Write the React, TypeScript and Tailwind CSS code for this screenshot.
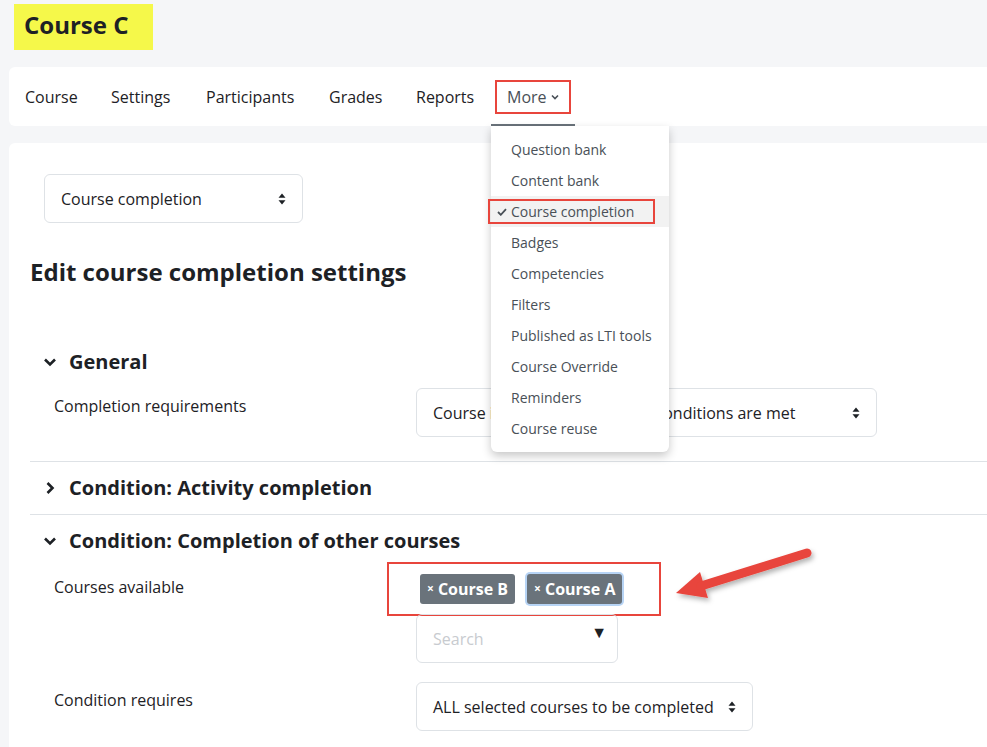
import React from 'react';

const font = { fontFamily: '"Open Sans", "Noto Sans", sans-serif' };

const navItems = [
  { label: 'Course', w: 'w-[86px]' },
  { label: 'Settings', w: 'w-[95px]' },
  { label: 'Participants', w: 'w-[123px]' },
  { label: 'Grades', w: 'w-[87px]' },
  { label: 'Reports', w: 'w-[75px]' },
];

const menuItems = [
  'Question bank',
  'Content bank',
  'Course completion',
  'Badges',
  'Competencies',
  'Filters',
  'Published as LTI tools',
  'Course Override',
  'Reminders',
  'Course reuse',
];

// Up/down arrows used by native-looking selects
const SortIcon = () => (
  <svg width="8" height="12" viewBox="0 0 8 12" className="shrink-0">
    <path d="M4 0.5 L7.5 4.8 H0.5 Z" fill="#1d2125" />
    <path d="M4 11.5 L7.5 7.2 H0.5 Z" fill="#1d2125" />
  </svg>
);

const ChevronDown = () => (
  <svg width="14" height="10" viewBox="0 0 14 10">
    <path d="M2 2.5 L7 7.5 L12 2.5" fill="none" stroke="#1d2125" strokeWidth="2.6" />
  </svg>
);

const ChevronRight = () => (
  <svg width="10" height="14" viewBox="0 0 10 14">
    <path d="M2.5 2 L7.5 7 L2.5 12" fill="none" stroke="#1d2125" strokeWidth="2.6" />
  </svg>
);

const Select = ({ label, width }: { label: string; width: string }) => (
  <div className={`${width} h-[49px] border border-[#dee2e6] rounded-md bg-white flex items-center justify-between pl-4 pr-4 overflow-hidden`}>
    <span className="text-[16px] text-[#1d2125] whitespace-nowrap">{label}</span>
    <SortIcon />
  </div>
);

const Badge = ({ label, focused }: { label: string; focused?: boolean }) => (
  <div
    className={`h-[30px] px-[7px] rounded-[3px] bg-[#6a737b] text-white text-[16px] font-bold flex items-center gap-1 ${
      focused ? 'ring-2 ring-[#b7d4f5]' : ''
    }`}
  >
    <span className="text-[12px]">×</span>
    <span>{label}</span>
  </div>
);

const SectionHeader = ({ title, open }: { title: string; open: boolean }) => (
  <div className="flex items-center h-[52px]">
    <div className="w-[39px] flex justify-center">{open ? <ChevronDown /> : <ChevronRight />}</div>
    <h3 className="text-[20px] font-bold text-[#1d2125]">{title}</h3>
  </div>
);

export default function App() {
  return (
    <div className="min-h-[747px] bg-[#f5f6f8] pl-[9px] overflow-hidden relative" style={font}>
      {/* Page title */}
      <div className="pt-[4px] pl-[5px]">
        <div className="inline-block bg-[#f5f84a] h-[46px] w-[139px] pl-[10px] pt-[6px]">
          <h1 className="text-[24px] font-bold text-[#1d2125] leading-[30px]">Course C</h1>
        </div>
      </div>

      {/* Secondary navigation */}
      <div className="mt-[17px] h-[59px] bg-white rounded-l-md flex items-center pl-4 relative">
        {navItems.map((n) => (
          <div key={n.label} className={`${n.w} text-[16px] text-[#1d2125] whitespace-nowrap`}>
            {n.label}
          </div>
        ))}
        <div className="relative h-full w-[84px] flex items-center justify-center">
          <div className="border-2 border-[#e8453c] h-[34px] w-[76px] pl-[10px] flex items-center gap-1 text-[16px] text-[#495057]">
            More
            <svg width="8" height="6" viewBox="0 0 8 6">
              <path d="M1 1.5 L4 4.5 L7 1.5" fill="none" stroke="#495057" strokeWidth="1.6" />
            </svg>
          </div>
          <div className="absolute left-0 right-0 bottom-0 h-[2px] bg-[#6a737b]" />
          {/* Dropdown menu */}
          <div className="absolute top-[59px] left-0 w-[178px] bg-white rounded-b-md shadow-[0_4px_10px_rgba(0,0,0,0.22)] py-2 z-20">
            {menuItems.map((m) => {
              const active = m === 'Course completion';
              return (
                <div
                  key={m}
                  className={`h-[31px] flex items-center text-[14px] text-[#495057] relative ${active ? 'bg-[#f2f2f2]' : ''}`}
                >
                  {active && (
                    <>
                      <div className="absolute left-[-3px] top-[3px] w-[167px] h-[25px] border-2 border-[#e8453c]" />
                      <svg width="10" height="8" viewBox="0 0 10 8" className="absolute left-[6px]">
                        <path d="M1 4 L3.8 6.8 L9 1.2" fill="none" stroke="#495057" strokeWidth="1.8" />
                      </svg>
                    </>
                  )}
                  <span className="pl-5 whitespace-nowrap">{m}</span>
                </div>
              );
            })}
          </div>
        </div>
      </div>

      {/* Main content card */}
      <div className="mt-[17px] bg-white rounded-tl-md pt-[31px] pl-[21px] pb-10">
        <div className="pl-[14px]">
          <Select label="Course completion" width="w-[259px]" />
        </div>
        <h2 className="mt-[34px] text-[24px] font-bold text-[#1d2125] leading-[30px]">
          Edit course completion settings
        </h2>

        <div className="mt-[49px]">
          <SectionHeader title="General" open />
          <div className="flex pb-[24px]">
            <div className="w-[386px] pl-[24px] pt-[6px] text-[16px] text-[#1d2125]">Completion requirements</div>
            <Select label="Course is complete when ALL conditions are met" width="w-[461px]" />
          </div>
        </div>

        <div className="border-t border-[#dee2e6]">
          <SectionHeader title="Condition: Activity completion" open={false} />
        </div>

        <div className="border-t border-[#dee2e6]">
          <SectionHeader title="Condition: Completion of other courses" open />
          <div className="flex mt-[7px]">
            <div className="w-[386px] pl-[24px] pt-[1px] text-[16px] text-[#1d2125]">Courses available</div>
            <div className="relative">
              <div className="flex gap-3 pl-[4px] h-[40px]">
                <Badge label="Course B" />
                <Badge label="Course A" focused />
              </div>
              <div className="absolute left-[-29px] top-[-12px] w-[274px] h-[54px] border-2 border-[#e8453c] pointer-events-none" />
              <div className="relative w-[202px] h-[49px] border border-[#dee2e6] rounded-md flex items-center pl-4">
                <span className="text-[16px] text-[#c8cbcf]">Search</span>
                <span className="absolute right-[10px] top-[9px] text-[16px] text-[#1d2125] leading-none">▼</span>
              </div>
            </div>
          </div>
          <div className="flex mt-[19px]">
            <div className="w-[386px] pl-[24px] pt-[6px] text-[16px] text-[#1d2125]">Condition requires</div>
            <Select label="ALL selected courses to be completed" width="w-[337px]" />
          </div>
        </div>
      </div>

      {/* Annotation arrow */}
      <svg className="absolute left-0 top-0 pointer-events-none" width="987" height="747" viewBox="0 0 987 747">
        <defs>
          <filter id="sh" x="-20%" y="-40%" width="140%" height="180%">
            <feDropShadow dx="2" dy="3" stdDeviation="2.5" floodColor="#000" floodOpacity="0.3" />
          </filter>
        </defs>
        <g filter="url(#sh)">
          <path d="M676 593 L700 572 L708 598 Z" fill="#e8453c" />
          <line x1="807" y1="553" x2="701" y2="586" stroke="#e8453c" strokeWidth="9" strokeLinecap="round" />
        </g>
      </svg>
    </div>
  );
}
